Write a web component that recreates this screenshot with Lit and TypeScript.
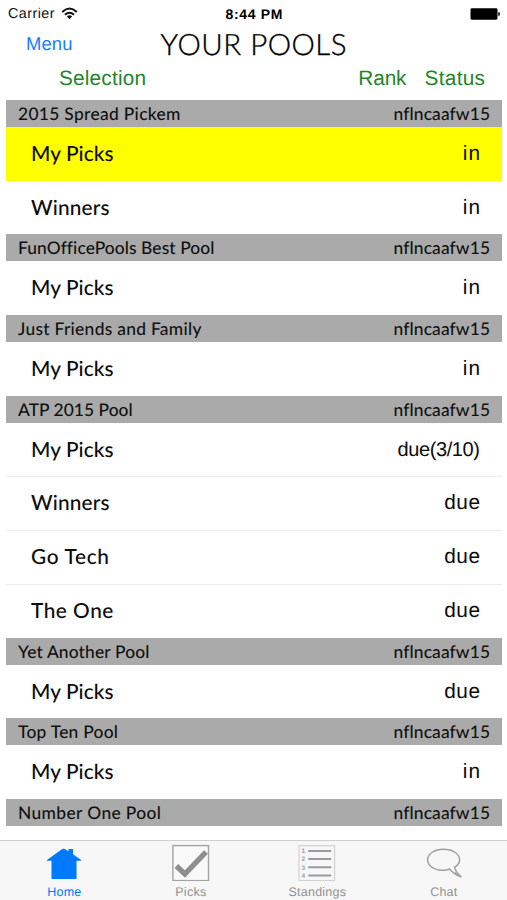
import { LitElement, html, css, svg } from "lit";
import { customElement, property } from "lit/decorators.js";

/** A single line of text whose tracking is adjusted so it spans `span` pixels. */
@customElement("fit-text")
class FitText extends LitElement {
  @property() text = "";
  @property({ type: Number }) span = 0;

  static styles = css`
    :host { display: inline-block; white-space: pre; }
    .line { display: inline-block; }
  `;

  render() {
    return html`<span class="line">${this.text}</span>`;
  }

  updated() {
    const line = this.renderRoot.querySelector(".line") as HTMLElement;
    line.style.letterSpacing = "0px";
    const gap = (this.span - line.getBoundingClientRect().width) / Math.max(1, this.text.length - 1);
    line.style.letterSpacing = `${gap}px`;
    line.style.marginRight = `${-gap}px`;
  }
}

interface Entry { name: string; span: number; status: string; statusSpan: number; active?: boolean; }
interface Pool { name: string; span: number; entries: Entry[]; }

const picks = (status: string, statusSpan: number, active = false): Entry =>
  ({ name: "My Picks", span: 82.5, status, statusSpan, active });
const IN = 17.3;
const DUE = 35.8;

const POOLS: Pool[] = [
  { name: "2015 Spread Pickem", span: 162.5, entries: [picks("in", IN, true), { name: "Winners", span: 78.5, status: "in", statusSpan: IN }] },
  { name: "FunOfficePools Best Pool", span: 195.5, entries: [picks("in", IN)] },
  { name: "Just Friends and Family", span: 183.5, entries: [picks("in", IN)] },
  {
    name: "ATP 2015 Pool", span: 114.7, entries: [
      picks("due(3/10)", 82.6),
      { name: "Winners", span: 78.5, status: "due", statusSpan: DUE },
      { name: "Go Tech", span: 78, status: "due", statusSpan: DUE },
      { name: "The One", span: 82.3, status: "due", statusSpan: DUE },
    ],
  },
  { name: "Yet Another Pool", span: 131.5, entries: [picks("due", DUE)] },
  { name: "Top Ten Pool", span: 100, entries: [picks("in", IN)] },
  { name: "Number One Pool", span: 143, entries: [] },
];

const homeIcon = svg`<svg width="40" height="40" viewBox="0 0 40 40">
  <path fill="#007aff" d="M3 19 L17.5 8.5 L19.8 7.4 L24.5 10.2 V8 H29 V13.2 L37 19 V19.8 H32.5 V37.5 Q32.5 38 32 38 H8 Q7.5 38 7.5 37.5 V19.8 H3 Z"/></svg>`;
const picksIcon = svg`<svg width="40" height="40" viewBox="0 0 40 40">
  <rect x="1.9" y="4.6" width="35.6" height="35" fill="#f9f9f9" stroke="#a3a3a3" stroke-width="1.4"/>
  <path fill="none" stroke="#8e8e8e" stroke-width="5.4" d="M5.4 25 L13.9 33 L35 11"/></svg>`;
const standingsIcon = svg`<svg width="40" height="40" viewBox="0 0 40 40">
  <rect x="2" y="4.6" width="35.6" height="35" fill="#f6f6f6" stroke="#d2d2d2" stroke-width="1.2"/>
  <path stroke="#9b9b9b" stroke-width="2" stroke-linecap="round" d="M12 10H33.5M12 18H33.5M12 26.3H33.5M12 34.5H33.5"/>
  <g fill="#a2a2a2" font-family="Liberation Sans" font-weight="700" font-size="6.5" text-anchor="middle">
    <text x="6.4" y="12.4">1</text><text x="6.4" y="20.4">2</text><text x="6.4" y="28.6">3</text><text x="6.4" y="36.8">4</text></g></svg>`;
const chatIcon = svg`<svg width="40" height="40" viewBox="0 0 40 40">
  <path fill="none" stroke="#a0a0a0" stroke-width="1.5" stroke-linejoin="round"
    d="M25.5 28 C23.8 28.8 22 29.3 19.5 29.3 C10.2 29.3 3.6 24.8 3.6 18.8 C3.6 12.8 10.4 8.2 19.5 8.2 C28.8 8.2 35.6 12.8 35.6 18.8 C35.6 22 33.4 24.6 30.5 26.2 Q31.5 31 37 35.8 Q30.5 33.8 25.5 28 Z"/>
  <path fill="#a0a0a0" d="M31.2 31 L37.2 36 L30 33 Z"/></svg>`;

const TABS = [
  { label: "Home", span: 34, icon: homeIcon, on: true },
  { label: "Picks", span: 31, icon: picksIcon, on: false },
  { label: "Standings", span: 57.5, icon: standingsIcon, on: false },
  { label: "Chat", span: 27, icon: chatIcon, on: false },
];

@customElement("app-root")
class AppRoot extends LitElement {
  static styles = css`
    :host {
      display: flex; flex-direction: column; height: 900px; overflow: hidden;
      background: #fff; color: #111;
      font-family: "Liberation Sans", Arial, sans-serif;
      text-rendering: geometricPrecision;
    }
    .status {
      height: 28px; flex: none; display: grid; grid-template-columns: 1fr auto 1fr;
      align-items: center; padding: 0 7px 0 8px; font-size: 14.3px; line-height: 28px; box-sizing: border-box;
    }
    .carrier { display: flex; align-items: center; gap: 6px; }
    .clock { font-weight: 700; font-size: 14px; color: #000; }
    .battery { justify-self: end; display: block; margin-top: -1px; }
    .wifi { display: block; margin-top: -2px; }
    .nav {
      height: 33px; flex: none; display: grid; grid-template-columns: 1fr auto 1fr;
      padding: 0 26px; line-height: 32px;
    }
    .menu { color: #177efb; font-size: 18.4px; }
    .title {
      font-family: Lato, sans-serif; font-size: 29.5px; font-weight: 300; color: #000;
      line-height: 34px; -webkit-text-stroke: 0.35px #000;
    }
    .columns {
      height: 39px; flex: none; display: flex; box-sizing: border-box;
      padding: 0 22px 0 59px; font-size: 20.8px; line-height: 36px; color: #23852b;
    }
    .rank { margin-left: auto; margin-right: 18px; }
    .list { flex: 1; min-height: 0; overflow: hidden; margin: 0 5px 0 6px; }
    .head {
      height: 26.88px; display: flex; justify-content: space-between; box-sizing: border-box;
      padding: 0 12px; background: #aaa; line-height: 28px;
      font-family: Lato, sans-serif; font-weight: 500; font-size: 17.4px;
    }
    .entry {
      height: 53.77px; display: flex; justify-content: space-between; box-sizing: border-box;
      padding: 0 22px 0 25px; line-height: 54px; color: #0c0c0c;
    }
    .entry + .entry { border-top: 1px solid #ececec; line-height: 52px; }
    .entry.active { background: #ff0; }
    .entry.active + .entry { border-top-color: #fff; }
    .name { font-family: Lato, sans-serif; font-weight: 500; font-size: 20.8px; }
    .state { font-size: 20.8px; }
    .state.long { font-size: 20px; }
    .tabs {
      height: 60px; flex: none; display: grid; grid-template-columns: repeat(4, 126.5px);
      background: #f7f7f7; border-top: 1px solid #cfcfcf; box-sizing: border-box; color: #929292;
      padding-left: 1px;
    }
    .tab { display: flex; flex-direction: column; align-items: center; font-size: 12.5px; line-height: 18px; }
    .tab svg { display: block; flex: none; margin-bottom: 2px; }
    .tab.on { color: #007aff; }
  `;

  render() {
    return html`
      <div class="status">
        <div class="carrier">
          <fit-text text="Carrier" span="46.5"></fit-text>
          <svg class="wifi" width="17" height="13" viewBox="0 0 17 13">
            <g fill="none" stroke="#111" stroke-width="1.9">
              <path d="M1.2 5 Q8.5 -1.8 15.8 5"/><path d="M3.9 7.7 Q8.5 3.6 13.1 7.7"/></g>
            <path fill="#111" d="M5.8 9.3 Q8.5 7.3 11.2 9.3 L8.5 12.2 Z"/>
          </svg>
        </div>
        <fit-text class="clock" text="8:44 PM" span="57"></fit-text>
        <svg class="battery" width="30" height="12" viewBox="0 0 30 12">
          <rect x="0.5" y="0.3" width="27" height="11.4" rx="1.4" fill="#000"/>
          <path d="M28.3 4 Q30 4.2 30 6 Q30 7.8 28.3 8 Z" fill="#000"/>
        </svg>
      </div>
      <div class="nav">
        <fit-text class="menu" text="Menu" span="46.5"></fit-text>
        <fit-text class="title" text="YOUR POOLS" span="186"></fit-text>
      </div>
      <div class="columns">
        <fit-text text="Selection" span="87"></fit-text>
        <fit-text class="rank" text="Rank" span="48.3"></fit-text>
        <fit-text text="Status" span="60.5"></fit-text>
      </div>
      <div class="list">
        ${POOLS.map((p) => html`
          <section>
            <div class="head">
              <fit-text .text=${p.name} .span=${p.span}></fit-text>
              <fit-text text="nflncaafw15" span="96.5"></fit-text>
            </div>
            ${p.entries.map((e) => html`
              <div class="entry ${e.active ? "active" : ""}">
                <fit-text class="name" .text=${e.name} .span=${e.span}></fit-text>
                <fit-text class="state ${e.status.length > 3 ? "long" : ""}" .text=${e.status} .span=${e.statusSpan}></fit-text>
              </div>`)}
          </section>`)}
      </div>
      <div class="tabs">
        ${TABS.map((t) => html`
          <div class="tab ${t.on ? "on" : ""}">${t.icon}<fit-text .text=${t.label} .span=${t.span}></fit-text></div>`)}
      </div>
    `;
  }
}
